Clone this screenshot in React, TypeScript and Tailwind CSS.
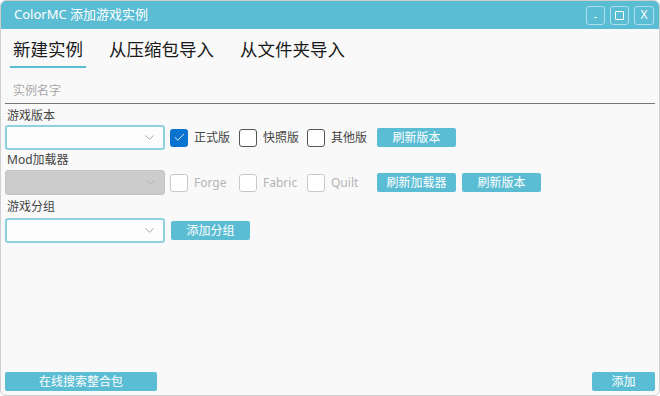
import { Check, ChevronDown } from 'lucide-react';

const font = { fontFamily: '"Noto Sans", "Noto Sans CJK SC", sans-serif' };

function Combo({ disabled }: { disabled?: boolean }) {
  return (
    <div
      className={`flex items-center justify-end w-[160px] h-[25px] rounded-[3px] pr-[6px] ${
        disabled ? 'bg-[#cccccc] border border-[#c4c4c4]' : 'bg-[#fdfdfd] border-2 border-[#8dd0df]'
      }`}
    >
      <ChevronDown size={15} strokeWidth={1.2} className={disabled ? 'text-[#aaaaaa]' : 'text-[#8a8a8a]'} />
    </div>
  );
}

function Box({ label, checked, faded, w }: { label: string; checked?: boolean; faded?: boolean; w: string }) {
  return (
    <div className={`flex items-center ${w}`}>
      <div
        className={`w-[18px] h-[18px] rounded-[3px] flex items-center justify-center ${
          checked ? 'bg-[#0a72cf]' : faded ? 'border border-[#c9c9c9] bg-white' : 'border border-[#555555] bg-white'
        }`}
      >
        {checked && <Check size={13} strokeWidth={1.6} className="text-white" />}
      </div>
      <span className={`ml-[6px] text-[12px] ${faded ? 'text-[#b4b4b4]' : 'text-[#444444]'}`}>{label}</span>
    </div>
  );
}

function Btn({ children, w = 'w-[79px]' }: { children: string; w?: string }) {
  return (
    <div className={`${w} h-[19px] rounded-[2px] bg-[#5bbdd3] text-white text-[12px] flex items-center justify-center`}>
      {children}
    </div>
  );
}

export default function App() {
  return (
    <div className="w-[660px] h-[396px] bg-white" style={font}>
      <div className="w-[660px] h-[396px] rounded-[6px] overflow-hidden border border-[#cfcfcf] bg-[#f9f9f9] flex flex-col">
        <div className="h-[28px] shrink-0 bg-[#5bbdd3] flex items-center pl-[13px] pr-[5px]">
          <span className="text-white text-[13px]">ColorMC 添加游戏实例</span>
          <div className="ml-auto flex gap-[5px]">
            <div className="w-[19px] h-[19px] rounded-[3px] border border-[#a9e0ec] text-white text-[11px] flex items-center justify-center leading-none">-</div>
            <div className="w-[19px] h-[19px] rounded-[3px] border border-[#a9e0ec] flex items-center justify-center">
              <div className="w-[9px] h-[9px] border border-white rounded-[1px]" />
            </div>
            <div className="w-[20px] h-[19px] rounded-[3px] border border-[#a9e0ec] text-white text-[12px] flex items-center justify-center leading-none">X</div>
          </div>
        </div>

        <div className="flex gap-[20px] pl-[9px] pt-[8px] h-[40px] shrink-0">
          <div className="px-[3px] border-b-2 border-[#5bbdd3] text-[17.5px] text-[#1a1a1a] leading-[24px] h-[31px]">新建实例</div>
          <div className="px-[3px] text-[17.5px] text-[#1a1a1a] leading-[24px]">从压缩包导入</div>
          <div className="px-[3px] text-[17.5px] text-[#1a1a1a] leading-[24px]">从文件夹导入</div>
        </div>

        <div className="mx-[4px] mt-[10px] h-[25px] border-b border-[#777777] flex items-center pl-[8px] text-[12px] text-[#a8a8a8]">
          实例名字
        </div>

        <div className="pl-[4px] pt-[2px]">
          <div className="text-[12px] text-[#444444] pl-[2px] h-[19px] leading-[19px]">游戏版本</div>
          <div className="flex items-center">
            <Combo />
            <div className="ml-[5px] flex items-center">
              <Box label="正式版" checked w="w-[69px]" />
              <Box label="快照版" w="w-[68px]" />
              <Box label="其他版" w="w-[70px]" />
              <Btn>刷新版本</Btn>
            </div>
          </div>

          <div className="text-[12px] text-[#444444] pl-[2px] h-[20px] leading-[20px]">Mod加载器</div>
          <div className="flex items-center">
            <Combo disabled />
            <div className="ml-[5px] flex items-center">
              <Box label="Forge" faded w="w-[69px]" />
              <Box label="Fabric" faded w="w-[68px]" />
              <Box label="Quilt" faded w="w-[70px]" />
              <Btn>刷新加载器</Btn>
              <div className="ml-[6px]">
                <Btn>刷新版本</Btn>
              </div>
            </div>
          </div>

          <div className="text-[12px] text-[#444444] pl-[2px] h-[23px] leading-[23px]">游戏分组</div>
          <div className="flex items-center">
            <Combo />
            <div className="ml-[6px]">
              <Btn>添加分组</Btn>
            </div>
          </div>
        </div>

        <div className="mt-auto flex justify-between px-[4px] pb-[4px]">
          <Btn w="w-[152px]">在线搜索整合包</Btn>
          <Btn w="w-[63px]">添加</Btn>
        </div>
      </div>
    </div>
  );
}
